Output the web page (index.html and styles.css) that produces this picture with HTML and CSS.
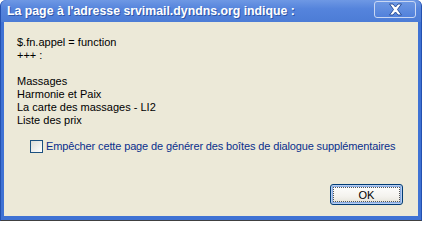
FILE: index.html
```html
<!DOCTYPE html>
<html lang="fr">
<head>
<meta charset="utf-8">
<title>Alerte</title>
<link rel="stylesheet" href="styles.css">
</head>
<body>
<div class="window">
  <div class="titlebar">
    <span class="title">La page à l'adresse srvimail.dyndns.org indique :</span>
    <button class="close" aria-label="Fermer">
      <svg width="15" height="13" viewBox="0 0 15 13">
        <path d="M1.5 1 L5 1 L7.5 4 L10 1 L13.5 1 L9.5 6.5 L13.5 12 L10 12 L7.5 9 L5 12 L1.5 12 L5.5 6.5 Z" fill="#ffffff" stroke="#2a4f9a" stroke-width="1" stroke-linejoin="round"/>
      </svg>
    </button>
  </div>
  <div class="body">
    <div class="message">
      <div>$.fn.appel = function</div>
      <div>+++ :</div>
      <div class="blank"></div>
      <div>Massages</div>
      <div>Harmonie et Paix</div>
      <div>La carte des massages - LI2</div>
      <div>Liste des prix</div>
    </div>
    <label class="check">
      <span class="box"></span>
      <span class="check-label">Empêcher cette page de générer des boîtes de dialogue supplémentaires</span>
    </label>
    <div class="footer">
      <button class="ok"><span class="focus">OK</span></button>
    </div>
  </div>
</div>
</body>
</html>
```

FILE: styles.css
```css
html, body {
  margin: 0;
  padding: 0;
  background: #ffffff;
}

.window {
  width: 422px;
  height: 221px;
  box-sizing: border-box;
  display: flex;
  flex-direction: column;
  background: #3f72d4;
  border-left: 1px solid #2451b0;
  border-right: 1px solid #2451b0;
  border-bottom: 1px solid #404040;
  border-radius: 6px 6px 0 0;
  padding: 0 3px 4px 3px;
}

.titlebar {
  height: 22px;
  margin: 0 -3px;
  padding: 0 5px 0 6px;
  display: flex;
  align-items: flex-start;
  background: linear-gradient(#6e98e4, #5584dc 40%, #4c7cd6);
  border-radius: 6px 6px 0 0;
}

.title {
  font-family: "Liberation Sans", Arial, sans-serif;
  font-weight: bold;
  font-size: 12.3px;
  color: #ffffff;
  line-height: 22px;
  text-shadow: 1px 1px 0 #2f57a8;
  white-space: nowrap;
}

.close {
  margin-left: auto;
  margin-top: 1px;
  width: 42px;
  height: 17px;
  padding: 0;
  border: 1px solid #c9d7f3;
  border-radius: 3px;
  background: linear-gradient(#6d97e3, #5181db);
  display: flex;
  align-items: center;
  justify-content: center;
}

.body {
  flex: 1;
  background: #ece9d8;
  display: flex;
  flex-direction: column;
  font-family: "Liberation Sans", Arial, sans-serif;
  font-size: 11px;
  color: #000000;
}

.message {
  padding: 14px 0 0 13px;
  line-height: 13px;
}

.blank {
  height: 13px;
}

.check {
  display: flex;
  align-items: center;
  margin: 13px 0 0 26px;
  height: 13px;
}

.box {
  width: 11px;
  height: 11px;
  border: 1px solid #1c5180;
  background: linear-gradient(135deg, #dcdcd7, #ffffff);
  margin-right: 3px;
}

.check-label {
  color: #0a2f8c;
  line-height: 13px;
  letter-spacing: -0.13px;
  white-space: nowrap;
}

.footer {
  display: flex;
  justify-content: flex-end;
  margin-top: 31px;
  padding-right: 15px;
}

.ok {
  width: 73px;
  height: 21px;
  padding: 2px;
  border: 1px solid #003c74;
  border-radius: 3px;
  background: linear-gradient(#ffffff, #f4f3ee 60%, #e3e1d6);
  box-shadow: inset 0 0 0 1px #b8cdef, inset 0 0 0 2px #89ade4;
  font-family: "Liberation Sans", Arial, sans-serif;
  font-size: 11px;
  color: #000000;
  display: flex;
}

.focus {
  flex: 1;
  border: 1px dotted #555555;
  display: flex;
  align-items: center;
  justify-content: center;
}
```
